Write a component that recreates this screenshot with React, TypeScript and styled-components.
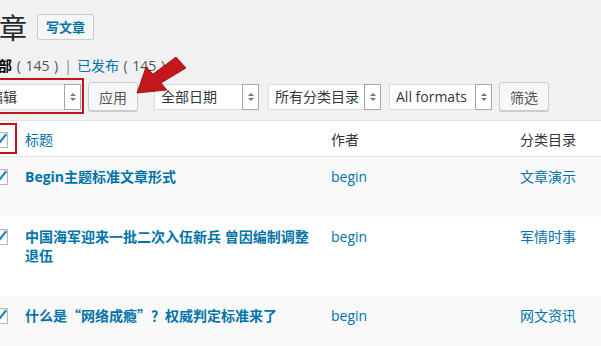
import React from "react";
import styled, { createGlobalStyle } from "styled-components";

const Global = createGlobalStyle`
  html, body { margin: 0; padding: 0; overflow: hidden; background: #f1f1f1; }
  body {
    font-family: "Open Sans", "Noto Sans CJK SC", sans-serif;
    font-size: 14px;
    color: #32373c;
  }
  * { box-sizing: border-box; }
`;

const Stage = styled.div`
  position: relative;
  width: 601px;
  height: 346px;
  overflow: hidden;
`;

const Wrap = styled.div`
  margin-left: -27px;
  width: 660px;
  padding-top: 10px;
`;

const TitleRow = styled.div`
  display: flex;
  align-items: center;
  height: 34px;
`;

const H1 = styled.h1`
  margin: 0 0 0 -2px;
  font-family: "Noto Sans CJK SC", sans-serif;
  font-size: 28px;
  line-height: 34px;
  font-weight: 400;
  color: #23282d;
`;

const AddNew = styled.a`
  margin-left: 10px;
  height: 26px;
  padding: 0 8px;
  line-height: 24px;
  font-size: 13px;
  font-weight: 700;
  color: #0073aa;
  background: #f7f7f7;
  border: 1px solid #ccc;
  border-radius: 2px;
  text-decoration: none;
`;

const SubSub = styled.ul`
  list-style: none;
  margin: 12px 0 0 11px;
  padding: 0;
  display: flex;
  line-height: 20px;
  font-size: 14px;
  color: #666;
`;

const SubItem = styled.li<{ $current?: boolean }>`
  color: ${(p) => (p.$current ? "#000" : "#0073aa")};
  font-weight: ${(p) => (p.$current ? 700 : 400)};
`;

const Count = styled.span`
  color: #555;
  font-weight: 400;
  word-spacing: 1px;
`;

const Sep = styled.span`
  color: #888;
  margin: 0 5px 0 6px;
`;

const Toolbar = styled.div`
  display: flex;
  align-items: center;
  height: 29px;
  margin-top: 6px;
  padding-left: 9px;
`;

const Annotated = styled.div`
  position: relative;
  display: flex;
`;

const RedFrame = styled.div<{ $t: number; $r: number; $b: number; $l: number }>`
  position: absolute;
  top: ${(p) => p.$t}px;
  right: ${(p) => p.$r}px;
  bottom: ${(p) => p.$b}px;
  left: ${(p) => p.$l}px;
  border: 2px solid #c4141b;
  pointer-events: none;
`;

const SelectBox = styled.div<{ $w: number; $gap?: number }>`
  display: flex;
  width: ${(p) => p.$w}px;
  height: 26px;
  margin-left: ${(p) => p.$gap ?? 0}px;
  background: #fff;
  border: 1px solid #ddd;
  font-size: 14px;
  color: #32373c;
`;

const SelectLabel = styled.span`
  flex: 1;
  padding-left: 6px;
  line-height: 24px;
  white-space: nowrap;
  overflow: hidden;
`;

const Spinner = styled.span`
  width: 17px;
  margin: -1px -1px -1px 0;
  border: 1px solid #a6a6a6;
  background: #fff;
  display: flex;
  flex-direction: column;
  align-items: center;
  justify-content: center;
  gap: 2px;
`;

const Tri = styled.span<{ $up?: boolean }>`
  width: 0;
  height: 0;
  border-left: 3px solid transparent;
  border-right: 3px solid transparent;
  ${(p) => (p.$up ? "border-bottom: 3px solid #777;" : "border-top: 3px solid #777;")}
`;

const Button = styled.button<{ $gap: number }>`
  margin-left: ${(p) => p.$gap}px;
  height: 29px;
  padding: 0 10px;
  font-family: "Noto Sans CJK SC", sans-serif;
  font-size: 14px;
  color: #555;
  background: #f7f7f7;
  border: 1px solid #ccc;
  border-radius: 3px;
  box-shadow: 0 1px 0 #ccc;
`;

const Table = styled.div`
  margin-top: 9px;
  margin-left: 12px;
  background: #fff;
  border-top: 1px solid #e1e1e1;
`;

const cols = "40px 306px 189px 1fr";

const HeadRow = styled.div`
  display: grid;
  grid-template-columns: ${cols};
  align-items: center;
  height: 36px;
  border-bottom: 1px solid #e1e1e1;
  font-size: 14px;
`;

const HeadCell = styled.div<{ $link?: boolean }>`
  color: ${(p) => (p.$link ? "#0073aa" : "#32373c")};
`;

const CheckCell = styled.div<{ $top?: number }>`
  padding-left: 7px;
  padding-top: ${(p) => p.$top ?? 0}px;
  display: flex;
  align-self: start;
`;

const Row = styled.div<{ $alt?: boolean }>`
  display: grid;
  grid-template-columns: ${cols};
  padding: 10px 0 31px;
  line-height: 19px;
  background: ${(p) => (p.$alt ? "#f9f9f9" : "#fff")};
`;

const TitleCell = styled.a`
  padding-right: 16px;
  font-weight: 700;
  color: #0073aa;
  text-decoration: none;
`;

const CjkPunct = styled.span`
  font-family: "Noto Sans CJK SC", sans-serif;
`;

const LinkCell = styled.a`
  color: #0073aa;
  text-decoration: none;
`;

const Box = styled.span`
  position: relative;
  width: 16px;
  height: 16px;
  border: 1px solid #b4b9be;
  background: #fff;
  box-shadow: inset 0 1px 2px rgba(0, 0, 0, 0.1);
  display: inline-flex;
`;

const CheckMark = styled.svg`
  position: absolute;
  left: -1px;
  top: -1px;
`;

const Arrow = styled.svg`
  position: absolute;
  left: 130px;
  top: 48px;
`;

function Check() {
  return (
    <Box>
      <CheckMark width="16" height="16" viewBox="0 0 16 16">
        <path d="M3 7.5 L6.8 11.5 L14.2 2.2" fill="none" stroke="#1e8cbe" strokeWidth="2.2" />
      </CheckMark>
    </Box>
  );
}

function Select({ label, w, gap }: { label: string; w: number; gap?: number }) {
  return (
    <SelectBox $w={w} $gap={gap}>
      <SelectLabel>{label}</SelectLabel>
      <Spinner>
        <Tri $up />
        <Tri />
      </Spinner>
    </SelectBox>
  );
}

const rows: { id: string; title: React.ReactNode; author: string; cat: string; alt: boolean }[] = [
  { id: "1", title: "Begin主题标准文章形式", author: "begin", cat: "文章演示", alt: true },
  { id: "2", title: "中国海军迎来一批二次入伍新兵 曾因编制调整退伍", author: "begin", cat: "军情时事", alt: false },
  {
    id: "3",
    title: (
      <>
        什么是<CjkPunct>“</CjkPunct>网络成瘾<CjkPunct>”</CjkPunct>？权威判定标准来了
      </>
    ),
    author: "begin",
    cat: "网文资讯",
    alt: true,
  },
];

export default function App() {
  return (
    <Stage>
      <Global />
      <Wrap>
        <TitleRow>
          <H1>文章</H1>
          <AddNew href="#">写文章</AddNew>
        </TitleRow>
        <SubSub>
          <SubItem $current>
            全部<Count> ( 145 )</Count>
          </SubItem>
          <Sep>|</Sep>
          <SubItem>
            已发布<Count> ( 145 )</Count>
          </SubItem>
        </SubSub>
        <Toolbar>
          <Annotated>
            <Select label="编辑" w={99} />
            <RedFrame $t={-6} $r={-3} $b={-4} $l={-4} />
          </Annotated>
          <Button $gap={7}>应用</Button>
          <Select label="全部日期" w={105} gap={16} />
          <Select label="所有分类目录" w={113} gap={9} />
          <Select label="All formats" w={103} gap={8} />
          <Button $gap={7}>筛选</Button>
        </Toolbar>
        <Table>
          <HeadRow>
            <CheckCell $top={11}>
              <Annotated>
                <Check />
                <RedFrame $t={-9} $r={-9} $b={-6} $l={-20} />
              </Annotated>
            </CheckCell>
            <HeadCell $link>标题</HeadCell>
            <HeadCell>作者</HeadCell>
            <HeadCell>分类目录</HeadCell>
          </HeadRow>
          {rows.map((r) => (
            <Row key={r.id} $alt={r.alt}>
              <CheckCell $top={2}>
                <Check />
              </CheckCell>
              <TitleCell href="#">{r.title}</TitleCell>
              <LinkCell href="#">{r.author}</LinkCell>
              <LinkCell href="#">{r.cat}</LinkCell>
            </Row>
          ))}
        </Table>
      </Wrap>
      <Arrow width="70" height="55" viewBox="130 48 70 55">
        <polygon
          points="137,93 146,67 153,74 176,57 186,68 161,83 167,90"
          fill="#c3161d"
          stroke="#8a0e12"
          strokeWidth="0.8"
        />
      </Arrow>
    </Stage>
  );
}
